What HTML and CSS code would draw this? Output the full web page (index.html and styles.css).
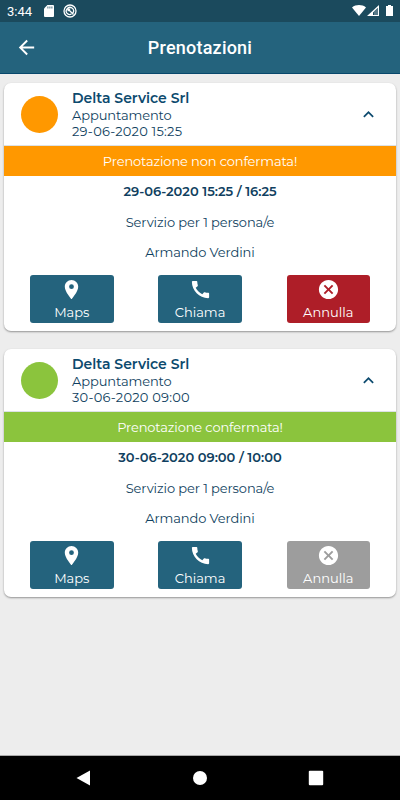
FILE: index.html
```html
<!DOCTYPE html>
<html lang="it">
<head>
<meta charset="utf-8">
<title>Prenotazioni</title>
<link rel="stylesheet" href="styles.css">
</head>
<body>
<svg class="defs" width="0" height="0">
  <symbol id="pin" viewBox="0 0 24 24"><path d="M12 2C8.13 2 5 5.13 5 9c0 5.25 7 13 7 13s7-7.75 7-13c0-3.87-3.13-7-7-7zm0 9.500a2.500 2.500 0 1 1 0-5 2.500 2.500 0 0 1 0 5z"/></symbol>
  <symbol id="phone" viewBox="0 0 24 24"><path d="M20.010 15.380c-1.230 0-2.420-.2-3.530-.56-.35-.12-.74-.03-1.010.24l-1.570 1.970c-2.830-1.350-5.480-3.900-6.890-6.830l1.950-1.660c.27-.28.35-.67.24-1.020-.37-1.110-.56-2.300-.56-3.530 0-.54-.45-.99-.99-.99H4.190C3.650 3 3 3.240 3 3.990 3 13.280 10.730 21 20.010 21c.71 0 .99-.63.99-1.180v-3.450c0-.54-.45-.99-.99-.99z"/></symbol>
  <symbol id="cancel" viewBox="0 0 24 24"><path d="M12 2C6.470 2 2 6.470 2 12s4.470 10 10 10 10-4.470 10-10S17.530 2 12 2zm5 13.590L15.590 17 12 13.410 8.410 17 7 15.590 10.590 12 7 8.410 8.410 7 12 10.590 15.590 7 17 8.410 13.410 12 17 15.590z"/></symbol>
  <symbol id="chevron" viewBox="0 0 24 24"><path d="M12 8l-6 6 1.410 1.410L12 10.830l4.590 4.580L18 14z"/></symbol>
</svg>
<div class="screen">
  <div class="status">
    <span class="clock">3:44</span>
    <svg class="sd" viewBox="0 0 10 12"><path d="M3.400 0H9a1 1 0 0 1 1 1v10a1 1 0 0 1-1 1H1a1 1 0 0 1-1-1V3.500z"/><path class="slots" d="M3.900 1.500v2M5.900 1.500v2M7.900 1.500v2"/></svg>
    <svg class="sync" viewBox="0 0 14 14"><circle cx="7" cy="7" r="6"/><path d="M4.600 9.800A3.600 3.600 0 1 1 9.900 9M5.200 5.200l5.300 5.300M4.600 9.800c1.200 1 2.600 1 3.900.2M5.200 7.200v-2h2"/></svg>
    <svg class="signals" viewBox="0 0 42 14"><path d="M0 3.400C3.900.2 10.100.2 14 3.400L7 12z"/><path d="M27 1v11H15zm-1.200 3L21 8.500V11h1V8l3.800-2.500z" fill-rule="evenodd"/><path class="dim" d="M22 7.500L26 4v7h-4z"/><path d="M34 2h2V1h3v1h2v10h-7z"/></svg>
  </div>
  <header class="appbar">
    <svg class="back" viewBox="0 0 24 24"><path d="M20 11H7.830l5.590-5.590L12 4l-8 8 8 8 1.410-1.410L7.830 13H20z"/></svg>
    <h1>Prenotazioni</h1>
  </header>
  <main>
    <section class="card pending">
      <div class="head">
        <span class="dot"></span>
        <div class="info"><h2>Delta Service Srl</h2><p class="kind">Appuntamento</p><p class="date">29-06-2020 15:25</p></div>
        <svg class="chevron"><use href="#chevron"/></svg>
      </div>
      <div class="banner"><span>Prenotazione non confermata!</span></div>
      <p class="row time"><span>29-06-2020 15:25 / 16:25</span></p>
      <p class="row service"><span>Servizio per 1 persona/e</span></p>
      <p class="row person"><span>Armando Verdini</span></p>
      <div class="actions">
        <button><svg><use href="#pin"/></svg><span>Maps</span></button>
        <button><svg><use href="#phone"/></svg><span>Chiama</span></button>
        <button class="cancel"><svg><use href="#cancel"/></svg><span>Annulla</span></button>
      </div>
    </section>
    <section class="card confirmed">
      <div class="head">
        <span class="dot"></span>
        <div class="info"><h2>Delta Service Srl</h2><p class="kind">Appuntamento</p><p class="date">30-06-2020 09:00</p></div>
        <svg class="chevron"><use href="#chevron"/></svg>
      </div>
      <div class="banner"><span>Prenotazione confermata!</span></div>
      <p class="row time"><span>30-06-2020 09:00 / 10:00</span></p>
      <p class="row service"><span>Servizio per 1 persona/e</span></p>
      <p class="row person"><span>Armando Verdini</span></p>
      <div class="actions">
        <button><svg><use href="#pin"/></svg><span>Maps</span></button>
        <button><svg><use href="#phone"/></svg><span>Chiama</span></button>
        <button class="cancel"><svg><use href="#cancel"/></svg><span>Annulla</span></button>
      </div>
    </section>
  </main>
  <nav class="navbar">
    <svg viewBox="0 0 16 16"><path d="M14 .5v15L.5 8z"/></svg>
    <svg viewBox="0 0 16 16"><circle cx="8" cy="8" r="7"/></svg>
    <svg viewBox="0 0 16 16"><rect x=".8" y=".8" width="14.400" height="14.400" rx="1"/></svg>
  </nav>
</div>
</body>
</html>
```
FILE: styles.css
```css
* { box-sizing: border-box; margin: 0; padding: 0; }
body { font-family: Montserrat, Inter, sans-serif; color: #103f60; }
.defs { display: block; }
svg { fill: currentColor; flex: none; }
.screen { height: 800px; display: flex; flex-direction: column; background: #ededed; overflow: hidden; }
.status { height: 22px; background: #1b4a5d; color: #fff; display: flex; align-items: center; padding: 0 6px 0 7px; font: 13px Roboto, sans-serif; }
.clock { width: 37px; line-height: 22px; padding-top: 1px; }
.sd { width: 10px; height: 12px; }
.slots { stroke: #1b4a5d; stroke-width: .8; }
.sync { width: 14px; height: 14px; margin-left: 9px; fill: none; stroke: #fff; stroke-width: 1.300; }
.signals { width: 42px; height: 14px; margin-left: auto; margin-top: 0; }
.dim { fill: #587a89; }
.appbar { height: 52px; background: #24637d; border-bottom: 1px solid #07476b; color: #fff; display: grid; grid-template-columns: 52px 1fr 52px; align-items: center; }
.back { width: 23px; height: 23px; justify-self: center; }
.appbar h1 { font: 500 18px/24px Roboto, sans-serif; letter-spacing: .22px; padding-top: 1px; text-align: center; }
main { flex: 1; padding: 9px 4px 0; display: flex; flex-direction: column; gap: 18px; }
.card { height: 248px; background: #fff; border-radius: 7px; box-shadow: 0 1px 2px rgba(0,0,0,.38); }
.head { height: 63px; display: flex; align-items: center; padding: 0 17px; border-bottom: 1px solid #dce2e6; }
.dot { width: 37px; height: 37px; border-radius: 50%; margin-right: 14px; }
.info { flex: 1; white-space: nowrap; }
.info h2 { font-size: 14px; font-weight: 600; line-height: 18px; color: #0c4a6e; }
.info p { font-size: 13px; line-height: 16px; }
.info .kind { letter-spacing: -.1px; }
.info .date { letter-spacing: .22px; }
.chevron { width: 21px; height: 21px; color: #0c4a6e; }
.banner { height: 30px; display: flex; align-items: center; justify-content: center; color: #fff; font-size: 13px; letter-spacing: -.13px; }
.pending .dot, .pending .banner { background: #ff9800; }
.confirmed .dot, .confirmed .banner { background: #8bc43d; }
.row { height: 30.500px; line-height: 30px; font-size: 13px; letter-spacing: -.1px; text-align: center; white-space: nowrap; }
.time { font-weight: 600; letter-spacing: 0; }
.actions { display: flex; justify-content: space-between; padding: 7px 26px 0; }
button { width: 83.500px; height: 48px; border: 0; border-radius: 3px; background: #24637d; color: #fff; font: 13px Montserrat, Inter, sans-serif; display: flex; flex-direction: column; align-items: center; padding-top: 3px; }
button svg { width: 23px; height: 23px; }
button span { line-height: 16px; margin-top: 3px; }
.pending .cancel { background: #ae1e28; }
.confirmed .cancel { background: #9d9d9d; }
.navbar { height: 45px; background: #000; border-top: 1px solid #aaa; color: #fff; display: flex; justify-content: space-between; padding: 14px 76px 0; }
.navbar svg { width: 16px; height: 16px; }
```
